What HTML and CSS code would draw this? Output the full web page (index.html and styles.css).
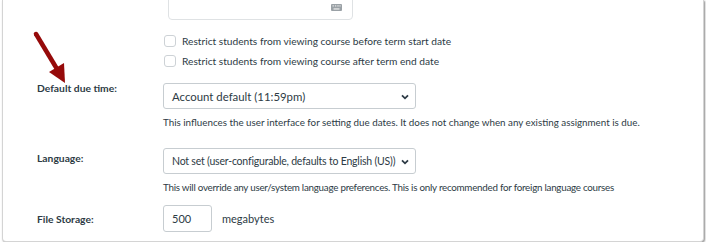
FILE: index.html
```html
<!DOCTYPE html>
<html lang="en">
<head>
    <meta charset="UTF-8">
    <meta name="viewport" content="width=device-width, initial-scale=1.0">
    <title>Course Settings</title>
    <link rel="stylesheet" href="styles.css">
</head>
<body>

    <div class="frame">
        <svg class="callout" width="80" height="90" viewBox="0 0 80 90">
            <line x1="36" y1="34" x2="57" y2="69" stroke="#960a0a" stroke-width="4.5" stroke-linecap="round"/>
            <polygon points="49,72 64,63 65,83" fill="#960a0a"/>
        </svg>

        <div class="settings">
            <div class="field">
                <div></div>
                <div>
                    <div class="date-box">
                        <svg class="kbd" width="11" height="7" viewBox="0 0 11 7">
                            <rect x="0" y="0" width="11" height="7" rx="1" fill="#9aa1a6"/>
                            <rect x="1.5" y="1.3" width="1.4" height="1.2" fill="#e8e8e8"/>
                            <rect x="3.9" y="1.3" width="1.4" height="1.2" fill="#e8e8e8"/>
                            <rect x="6.3" y="1.3" width="1.4" height="1.2" fill="#e8e8e8"/>
                            <rect x="8.4" y="1.3" width="1.2" height="1.2" fill="#e8e8e8"/>
                            <rect x="2.5" y="4.3" width="6" height="1.3" fill="#e8e8e8"/>
                        </svg>
                    </div>
                    <div class="checks">
                        <label class="check"><span class="box"></span>Restrict students from viewing course before term start date</label>
                        <label class="check"><span class="box"></span>Restrict students from viewing course after term end date</label>
                    </div>
                </div>
            </div>

            <div class="field field-due">
                <div class="label">Default due time:</div>
                <div>
                    <div class="select">
                        <span>Account default (11:59pm)</span>
                        <svg class="chevron" width="8" height="6" viewBox="0 0 8 6"><path d="M1 1.3 L4 4.3 L7 1.3" fill="none" stroke="#2d3b45" stroke-width="1.8"/></svg>
                    </div>
                    <p class="help">This influences the user interface for setting due dates. It does not change when any existing assignment is due.</p>
                </div>
            </div>

            <div class="field field-lang">
                <div class="label">Language:</div>
                <div>
                    <div class="select select-tight">
                        <span>Not set (user-configurable, defaults to English (US))</span>
                        <svg class="chevron" width="8" height="6" viewBox="0 0 8 6"><path d="M1 1.3 L4 4.3 L7 1.3" fill="none" stroke="#2d3b45" stroke-width="1.8"/></svg>
                    </div>
                    <p class="help help-tight">This will override any user/system language preferences. This is only recommended for foreign language courses</p>
                </div>
            </div>

            <div class="field field-storage">
                <div class="label">File Storage:</div>
                <div class="storage">
                    <div class="num">500</div>
                    <span>megabytes</span>
                </div>
            </div>
        </div>
    </div>

</body>
</html>
```

FILE: styles.css
```css
body {
    margin: 0;
    background: #ffffff;
    font-family: Lato, "Open Sans", sans-serif;
    color: #2d3b45;
}
.frame {
    position: relative;
    margin: 0 2px;
    height: 242px;
    box-sizing: border-box;
    border: 1px solid #d4d4d4;
    border-top: none;
    border-radius: 0 0 4px 4px;
    box-shadow: 1px 1px 2px rgba(0, 0, 0, 0.45);
    background: #fff;
    overflow: hidden;
}
.callout {
    position: absolute;
    left: -3px;
    top: 0;
}
.settings {
    padding-left: 34px;
}
.field {
    display: grid;
    grid-template-columns: 126px 500px;
}
.label {
    font-size: 10.3px;
    font-weight: 700;
    line-height: 14px;
}
.date-box {
    position: relative;
    margin: -10px 0 0 5px;
    width: 185px;
    height: 30px;
    box-sizing: border-box;
    border: 1px solid #dfe2e4;
    border-radius: 4px;
}
.kbd {
    position: absolute;
    right: 10px;
    bottom: 8px;
}
.checks {
    margin-top: 13px;
    display: flex;
    flex-direction: column;
    gap: 4px;
}
.check {
    display: flex;
    align-items: center;
    height: 16px;
    font-size: 10.2px;
    white-space: nowrap;
}
.box {
    width: 12px;
    height: 12px;
    box-sizing: border-box;
    border: 1px solid #cdd2d6;
    border-radius: 3px;
    margin: 0 6px 0 1px;
}
.field-due {
    margin-top: 14px;
}
.field-due .label {
    margin-top: -2px;
}
.field-lang {
    margin-top: 20px;
}
.field-lang .label {
    padding-top: 3px;
}
.field-storage {
    margin-top: 12px;
}
.field-storage .label {
    padding-top: 7px;
}
.select {
    position: relative;
    width: 253px;
    height: 26px;
    box-sizing: border-box;
    border: 1px solid #c7cdd1;
    border-radius: 3px;
    padding: 0 8px;
    display: flex;
    align-items: center;
    font-size: 11.4px;
    white-space: nowrap;
}
.select-tight {
    font-size: 10.5px;
    letter-spacing: -0.2px;
}
.chevron {
    position: absolute;
    right: 6px;
    top: 10px;
}
.help {
    margin: 7px 0 0;
    font-size: 9.8px;
    line-height: 12px;
    white-space: nowrap;
}
.help-tight {
    letter-spacing: -0.25px;
}
.storage {
    display: flex;
    align-items: center;
    gap: 10px;
    font-size: 11px;
}
.num {
    width: 49px;
    height: 27px;
    box-sizing: border-box;
    border: 1px solid #c7cdd1;
    border-radius: 3px;
    padding: 0 8px;
    display: flex;
    align-items: center;
}
```
